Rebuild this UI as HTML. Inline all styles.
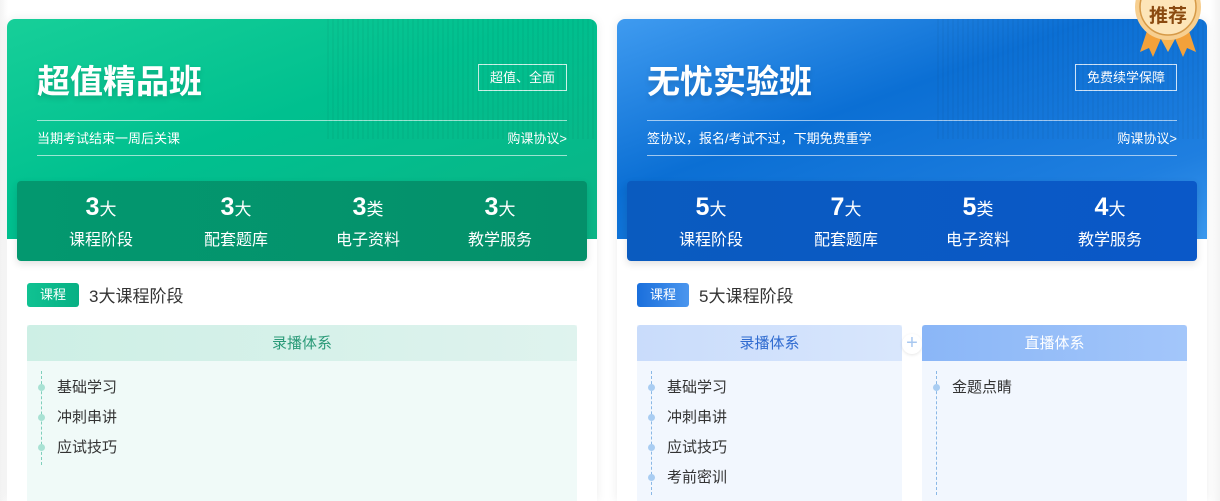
<!DOCTYPE html>
<html><head><meta charset="utf-8"><style>
*{margin:0;padding:0;box-sizing:border-box}
html,body{width:1220px;height:501px;overflow:hidden}
body{background:#fff;font-family:"Liberation Sans","Noto Sans CJK SC",sans-serif;position:relative}
.card{position:absolute;top:19px;width:590px;height:482px;background:#fff;border-radius:8px 8px 0 0;box-shadow:0 0 10px rgba(0,0,0,.08);overflow:visible}
.hd{position:absolute;left:0;top:0;width:590px;height:220px;border-radius:8px 8px 0 0;overflow:hidden}
.g .hd{background:linear-gradient(160deg,#17cf99 0%,#00c08f 45%,#0bb486 100%)}
.b .hd{background:linear-gradient(160deg,#3f9bf0 0%,#0b6fd4 40%,#1f7fe0 80%,#3a98ee 100%)}
.hd:after{content:"";position:absolute;left:320px;top:0;width:270px;height:120px;background:repeating-linear-gradient(90deg,rgba(0,0,0,.05) 0 2px,transparent 2px 5px);opacity:.7}
.t{position:absolute;left:30px;top:36px;font-size:33px;font-weight:bold;color:#fff;text-shadow:0 3px 6px rgba(0,0,0,.15)}
.tag{position:absolute;right:30px;top:45px;height:27px;border:1px solid rgba(255,255,255,.8);color:#fff;font-size:13px;line-height:25px;padding:0 11px}
.ln{position:absolute;left:30px;width:530px;height:1px;background:rgba(255,255,255,.6)}
.sub{position:absolute;left:30px;top:109px;font-size:13px;color:#fff}
.ag{position:absolute;right:30px;top:109px;font-size:13px;color:#fff}
.st{position:absolute;left:10px;top:162px;width:570px;height:80px;border-radius:4px;box-shadow:0 3px 8px rgba(0,0,0,.12)}
.g .st{background:linear-gradient(90deg,#03986f,#04906a)}
.b .st{background:linear-gradient(90deg,#0a5bbf,#0a58c8)}
.c{position:absolute;top:12px;width:120px;margin-left:-60px;text-align:center;color:#fff}
.c b{font-size:25px;font-weight:bold}
.c i{font-style:normal;font-size:17px}
.c div{font-size:16px;margin-top:4px}
.ct{position:absolute;left:20px;top:264px;width:52px;height:24px;border-radius:3px;color:#fff;font-size:13px;text-align:center;line-height:24px}
.g .ct{background:linear-gradient(90deg,#10c292,#07b084)}
.b .ct{background:linear-gradient(90deg,#1a6fdc,#4b96ee)}
.cx{position:absolute;left:82px;top:263px;font-size:17px;color:#333}
.box{position:absolute;top:306px;height:200px}
.bh{height:36px;line-height:38px;text-align:center;font-size:15px;border-radius:3px 3px 0 0}
.bl{position:relative;padding:12px 0 0 30px}
.bl:before{content:"";position:absolute;left:14px;top:10px;bottom:0;border-left:1px dashed}
.it{position:relative;font-size:15px;color:#333;height:30px;line-height:30px}
.it:before{content:"";position:absolute;left:-19px;top:11px;width:7px;height:7px;border-radius:50%}
.g .bl:before{border-color:#7fcfbc}.g .it:before{background:#a9e2d4}
.b .bl:before{border-color:#8ab8e6}.b .it:before{background:#a9cdf2}
</style></head><body>
<div style="position:absolute;left:0;top:0;width:1220px;height:501px;background:linear-gradient(90deg,#f3f3f3 0,#fff 8px,#fff 1210px,#f3f3f3 1220px)"></div>

<div class="card g" style="left:7px">
 <div class="hd">
  <div class="t">超值精品班</div>
  <div class="tag">超值、全面</div>
  <div class="ln" style="top:101px"></div>
  <div class="sub">当期考试结束一周后关课</div>
  <div class="ag">购课协议&gt;</div>
  <div class="ln" style="top:136px"></div>
 </div>
 <div class="st">
  <div class="c" style="left:84px"><b>3</b><i>大</i><div>课程阶段</div></div>
  <div class="c" style="left:219px"><b>3</b><i>大</i><div>配套题库</div></div>
  <div class="c" style="left:351px"><b>3</b><i>类</i><div>电子资料</div></div>
  <div class="c" style="left:483px"><b>3</b><i>大</i><div>教学服务</div></div>
 </div>
 <div class="ct">课程</div><div class="cx">3大课程阶段</div>
 <div class="box" style="left:20px;width:550px;background:#f0faf8">
  <div class="bh" style="background:linear-gradient(90deg,#cdefe5,#dff3ee);color:#2a9a78">录播体系</div>
  <div class="bl" style="height:104px"><div class="it">基础学习</div><div class="it">冲刺串讲</div><div class="it">应试技巧</div></div>
 </div>
</div>

<div class="card b" style="left:617px">
 <div class="hd">
  <div class="t">无忧实验班</div>
  <div class="tag">免费续学保障</div>
  <div class="ln" style="top:101px"></div>
  <div class="sub">签协议，报名/考试不过，下期免费重学</div>
  <div class="ag">购课协议&gt;</div>
  <div class="ln" style="top:136px"></div>
 </div>
 <div class="st">
  <div class="c" style="left:84px"><b>5</b><i>大</i><div>课程阶段</div></div>
  <div class="c" style="left:219px"><b>7</b><i>大</i><div>配套题库</div></div>
  <div class="c" style="left:351px"><b>5</b><i>类</i><div>电子资料</div></div>
  <div class="c" style="left:483px"><b>4</b><i>大</i><div>教学服务</div></div>
 </div>
 <div class="ct">课程</div><div class="cx">5大课程阶段</div>
 <div class="box" style="left:20px;width:265px;background:#f2f7fe">
  <div class="bh" style="background:linear-gradient(90deg,#c9dcfb,#d8e6fc);color:#2f6bd0">录播体系</div>
  <div class="bl" style="height:134px"><div class="it">基础学习</div><div class="it">冲刺串讲</div><div class="it">应试技巧</div><div class="it">考前密训</div></div>
 </div>
 <div style="position:absolute;left:285px;top:315px;width:20px;height:20px;border-radius:50%;background:#fff;color:#a8c8f0;font-size:20px;line-height:19px;text-align:center;box-shadow:0 1px 3px rgba(0,0,0,.1)">+</div>
 <div class="box" style="left:305px;width:265px;background:#f2f7fe">
  <div class="bh" style="background:linear-gradient(90deg,#8ab6f7,#a3c6fa);color:#fff">直播体系</div>
  <div class="bl" style="height:134px"><div class="it">金题点睛</div></div>
 </div>
</div>

<svg style="position:absolute;left:1128px;top:0" width="80" height="62" viewBox="0 0 80 62">
 <path d="M20 28 L12 52 L21 48 L25 57 L34 36Z" fill="#f3a13a"/>
 <path d="M60 28 L68 52 L59 48 L55 57 L46 36Z" fill="#f3a13a"/>
 <path d="M28 30 L40 52 L52 30Z" fill="#f7b24d"/>
 <circle cx="40" cy="7" r="33" fill="#f7cf90"/>
 <circle cx="40" cy="7" r="28" fill="#fde5b8" stroke="#d69a48" stroke-width="1.5"/>
 <text x="40" y="22" text-anchor="middle" font-family="Liberation Sans,Noto Sans CJK SC,sans-serif" font-weight="bold" font-size="19" fill="#8a4a10">推荐</text>
</svg>
</body></html>
